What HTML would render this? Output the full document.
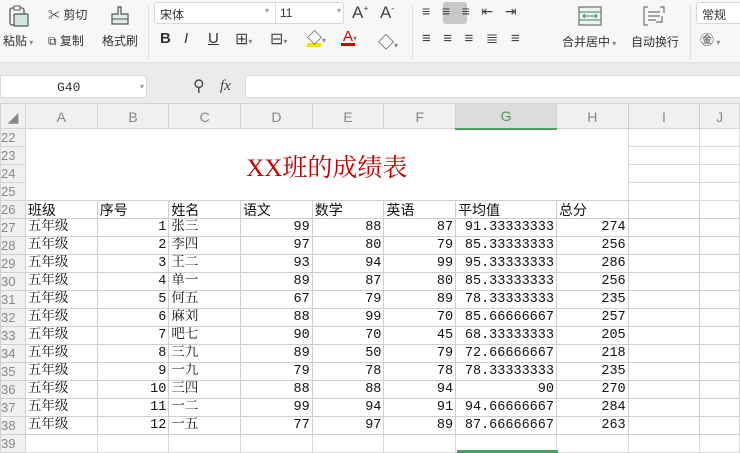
<!DOCTYPE html>
<html><head><meta charset="utf-8"><style>
*{margin:0;padding:0;box-sizing:border-box}
body{width:740px;height:453px;overflow:hidden;background:#fff;font-family:"Liberation Sans","Noto Sans CJK SC",sans-serif;position:relative}
.rib{position:absolute;left:0;top:0;width:740px;height:63px;background:#f7f7f7;border-bottom:1px solid #e0e0e0}
.band{position:absolute;left:0;top:63px;width:740px;height:40px;background:#ebebeb}
.t{position:absolute;font-size:12px;color:#333;white-space:nowrap}
.box{position:absolute;background:#fff;border:1px solid #d8d8d8;border-radius:3px}
.sep{position:absolute;top:4px;width:1px;height:56px;background:#e0e0e0}
table{position:absolute;left:0;top:103px;border-collapse:collapse;table-layout:fixed;font-family:"Liberation Mono","Noto Serif CJK SC",monospace;font-size:13.5px;color:#111}
td{border:1px solid #dadada;height:18px;padding:1px 2px 0;white-space:nowrap;overflow:hidden;line-height:16px}
tr.h td{height:25px;background:#f0f0f0;color:#888;text-align:center;font-family:"Liberation Sans",sans-serif;font-size:14px;border-color:#d4d4d4}
td.rh{background:#f0f0f0;color:#888;font-family:"Liberation Sans",sans-serif;font-size:13px;padding:0;text-align:left;border-color:#d4d4d4}
td.r{text-align:right}
.d td{border-color:#cfcfcf}
.zh{font-family:"Noto Sans CJK SC",sans-serif;font-size:14px}
</style></head><body>
<div class="rib">
 <svg style="position:absolute;left:8px;top:5px" width="22" height="24"><rect x="2" y="3" width="14" height="17" rx="2" fill="none" stroke="#555" stroke-width="1.3"/><rect x="6" y="9" width="14" height="12" rx="1" fill="#cfe6dc" stroke="#555" stroke-width="1.2"/><rect x="6" y="1" width="6" height="4" fill="#fff" stroke="#555"/></svg>
 <div class="t" style="left:3px;top:32px">粘贴<span style="font-size:8px;color:#888"> ▾</span></div>
 <div class="t" style="left:48px;top:6px">✂ 剪切</div>
 <div class="t" style="left:48px;top:32px">⧉ 复制</div>
 <svg style="position:absolute;left:108px;top:5px" width="24" height="22"><path d="M10 2h3v7h7v10H4V9h6z" fill="#dcece4" stroke="#555" stroke-width="1.2"/><path d="M4 14h16" stroke="#555"/></svg>
 <div class="t" style="left:102px;top:32px">格式刷</div>
 <div class="sep" style="left:148px"></div>
 <div class="box" style="left:154px;top:2px;width:190px;height:22px"></div>
 <div class="t" style="left:160px;top:6px">宋体</div>
 <div class="t" style="left:265px;top:6px;font-size:8px;color:#999">▾</div>
 <div style="position:absolute;left:275px;top:3px;width:1px;height:20px;background:#ddd"></div>
 <div class="t" style="left:280px;top:6px">11</div>
 <div class="t" style="left:337px;top:6px;font-size:8px;color:#999">▾</div>
 <div class="t" style="left:352px;top:3px;font-size:17px;color:#444">A<sup style="font-size:9px">+</sup></div>
 <div class="t" style="left:380px;top:3px;font-size:17px;color:#444">A<sup style="font-size:9px">-</sup></div>
 <div class="t" style="left:160px;top:30px;font-size:15px;font-weight:bold;color:#333">B</div>
 <div class="t" style="left:184px;top:30px;font-size:15px;font-style:italic;color:#333">I</div>
 <div class="t" style="left:208px;top:30px;font-size:15px;text-decoration:underline;color:#333">U</div>
 <div class="t" style="left:235px;top:29px;font-size:16px;color:#444">⊞<span style="font-size:8px;color:#888">▾</span></div>
 <div class="t" style="left:270px;top:29px;font-size:16px;color:#444">⊟<span style="font-size:8px;color:#888">▾</span></div>
 <div style="position:absolute;left:307px;top:43px;width:14px;height:4px;background:#f0e000"></div>
 <div class="t" style="left:307px;top:27px;font-size:15px;color:#444">◇<span style="font-size:8px;color:#888">▾</span></div>
 <div style="position:absolute;left:341px;top:43px;width:14px;height:3px;background:#c00"></div>
 <div class="t" style="left:343px;top:28px;font-size:15px;color:#c00">A<span style="font-size:8px;color:#888">▾</span></div>
 <div class="t" style="left:378px;top:29px;font-size:16px;color:#444">◇<span style="font-size:8px;color:#888">▾</span></div>
 <div class="sep" style="left:412px"></div>
 <div style="position:absolute;left:443px;top:2px;width:24px;height:22px;background:#c8c8c8;border-radius:3px"></div>
 <div class="t" style="left:422px;top:3px;font-size:14px;color:#444">≡&nbsp;&nbsp; ≡&nbsp;&nbsp; ≡&nbsp;&nbsp; ⇤&nbsp;&nbsp; ⇥</div>
 <div class="t" style="left:422px;top:29px;font-size:15px;color:#444">≡&nbsp;&nbsp; ≡&nbsp;&nbsp; ≡&nbsp;&nbsp; ≣&nbsp;&nbsp; ≡</div>
 <svg style="position:absolute;left:578px;top:5px" width="24" height="22"><rect x="1" y="2" width="22" height="18" fill="#eaf3ee" stroke="#555"/><path d="M1 7h22M1 15h22M5 11h14M7 9l-2 2 2 2M17 9l2 2-2 2" stroke="#3a8a5a" fill="none"/></svg>
 <div class="t" style="left:562px;top:33px">合并居中<span style="font-size:8px;color:#888"> ▾</span></div>
 <svg style="position:absolute;left:642px;top:5px" width="24" height="22"><path d="M6 2H2v18h4M18 2h4v6M6 7h12M6 11h12M6 15h8M20 11v6h-6" stroke="#555" fill="none"/></svg>
 <div class="t" style="left:631px;top:33px">自动换行</div>
 <div class="sep" style="left:690px"></div>
 <div class="box" style="left:696px;top:2px;width:60px;height:22px"></div>
 <div class="t" style="left:702px;top:6px">常规</div>
 <div class="t" style="left:700px;top:30px;font-size:14px;color:#444">㊎<span style="font-size:8px;color:#888"> ▾</span></div>
</div>
<div class="band"></div>
<div class="box" style="left:0;top:75px;width:147px;height:23px;border-radius:0 4px 4px 0"></div>
<div class="t" style="left:57px;top:80px;font-family:'Liberation Mono',monospace;font-size:13px">G40</div>
<div class="t" style="left:140px;top:82px;font-size:8px;color:#999">▾</div>
<div class="t" style="left:193px;top:76px;font-size:16px;color:#444">⚲</div>
<div class="t" style="left:220px;top:78px;font-size:15px;font-style:italic;color:#444;font-family:'Liberation Serif',serif">fx</div>
<div class="box" style="left:245px;top:75px;width:500px;height:23px"></div>
<table>
<colgroup><col style="width:25px"><col style="width:72px"><col style="width:72px"><col style="width:72px"><col style="width:72px"><col style="width:72px"><col style="width:72px"><col style="width:101px"><col style="width:72px"><col style="width:72px"><col style="width:40px"></colgroup>
<tr class="h"><td>◢</td><td>A</td><td>B</td><td>C</td><td>D</td><td>E</td><td>F</td><td style="background:#dcdcdc;color:#4a9a5a;border-bottom:2px solid #4aa060">G</td><td>H</td><td>I</td><td>J</td></tr>
<tr><td class="rh">22</td><td colspan="8" rowspan="4" style="text-align:center;font-family:'Liberation Serif','Noto Serif CJK SC',serif;font-size:25px;color:#c00000;padding-top:8px;border:none;border-bottom:1px solid #cfcfcf">XX班的成绩表</td><td></td><td></td></tr>
<tr><td class="rh">23</td><td></td><td></td></tr>
<tr><td class="rh">24</td><td></td><td></td></tr>
<tr><td class="rh">25</td><td></td><td></td></tr>
<tr class="d zh"><td class="rh">26</td><td>班级</td><td>序号</td><td>姓名</td><td>语文</td><td>数学</td><td>英语</td><td>平均值</td><td>总分</td><td></td><td></td></tr>
<tr class="d"><td class="rh">27</td><td>五年级</td><td class="r">1</td><td>张三</td><td class="r">99</td><td class="r">88</td><td class="r">87</td><td class="r">91.33333333</td><td class="r">274</td><td></td><td></td></tr>
<tr class="d"><td class="rh">28</td><td>五年级</td><td class="r">2</td><td>李四</td><td class="r">97</td><td class="r">80</td><td class="r">79</td><td class="r">85.33333333</td><td class="r">256</td><td></td><td></td></tr>
<tr class="d"><td class="rh">29</td><td>五年级</td><td class="r">3</td><td>王二</td><td class="r">93</td><td class="r">94</td><td class="r">99</td><td class="r">95.33333333</td><td class="r">286</td><td></td><td></td></tr>
<tr class="d"><td class="rh">30</td><td>五年级</td><td class="r">4</td><td>单一</td><td class="r">89</td><td class="r">87</td><td class="r">80</td><td class="r">85.33333333</td><td class="r">256</td><td></td><td></td></tr>
<tr class="d"><td class="rh">31</td><td>五年级</td><td class="r">5</td><td>何五</td><td class="r">67</td><td class="r">79</td><td class="r">89</td><td class="r">78.33333333</td><td class="r">235</td><td></td><td></td></tr>
<tr class="d"><td class="rh">32</td><td>五年级</td><td class="r">6</td><td>麻刘</td><td class="r">88</td><td class="r">99</td><td class="r">70</td><td class="r">85.66666667</td><td class="r">257</td><td></td><td></td></tr>
<tr class="d"><td class="rh">33</td><td>五年级</td><td class="r">7</td><td>吧七</td><td class="r">90</td><td class="r">70</td><td class="r">45</td><td class="r">68.33333333</td><td class="r">205</td><td></td><td></td></tr>
<tr class="d"><td class="rh">34</td><td>五年级</td><td class="r">8</td><td>三九</td><td class="r">89</td><td class="r">50</td><td class="r">79</td><td class="r">72.66666667</td><td class="r">218</td><td></td><td></td></tr>
<tr class="d"><td class="rh">35</td><td>五年级</td><td class="r">9</td><td>一九</td><td class="r">79</td><td class="r">78</td><td class="r">78</td><td class="r">78.33333333</td><td class="r">235</td><td></td><td></td></tr>
<tr class="d"><td class="rh">36</td><td>五年级</td><td class="r">10</td><td>三四</td><td class="r">88</td><td class="r">88</td><td class="r">94</td><td class="r">90</td><td class="r">270</td><td></td><td></td></tr>
<tr class="d"><td class="rh">37</td><td>五年级</td><td class="r">11</td><td>一二</td><td class="r">99</td><td class="r">94</td><td class="r">91</td><td class="r">94.66666667</td><td class="r">284</td><td></td><td></td></tr>
<tr class="d"><td class="rh">38</td><td>五年级</td><td class="r">12</td><td>一五</td><td class="r">77</td><td class="r">97</td><td class="r">89</td><td class="r">87.66666667</td><td class="r">263</td><td></td><td></td></tr>
<tr><td class="rh">39</td><td></td><td></td><td></td><td></td><td></td><td></td><td></td><td></td><td></td><td></td></tr>
</table>
<div style="position:absolute;left:457px;top:450px;width:101px;height:3px;background:#4aa060"></div>
</body></html>
